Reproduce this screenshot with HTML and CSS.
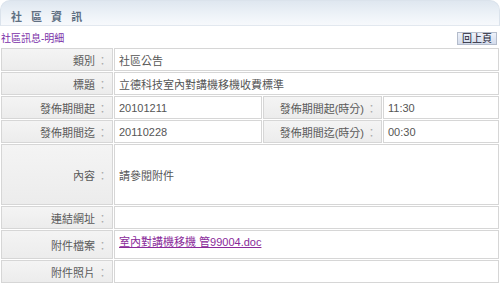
FILE: index.html
```html
<!DOCTYPE html>
<html lang="zh-Hant">
<head>
  <meta charset="UTF-8">
  <title>社區資訊</title>
  <link rel="stylesheet" href="styles.css">
</head>
<body>
  <div class="page">
    <div class="header">
      <h1 class="title">社 區 資 訊</h1>
    </div>

    <div class="toolbar">
      <span class="crumb">社區訊息-明細</span>
      <button class="back-btn">回上頁</button>
    </div>

    <table class="detail">
      <colgroup>
        <col class="c-label">
        <col class="c-value">
        <col class="c-label2">
        <col class="c-value2">
      </colgroup>
      <tr>
        <th>類別<span class="colon">：</span></th>
        <td colspan="3">社區公告</td>
      </tr>
      <tr>
        <th>標題<span class="colon">：</span></th>
        <td colspan="3">立德科技室內對講機移機收費標準</td>
      </tr>
      <tr>
        <th>發佈期間起<span class="colon">：</span></th>
        <td>20101211</td>
        <th>發佈期間起(時分)<span class="colon">：</span></th>
        <td>11:30</td>
      </tr>
      <tr>
        <th>發佈期間迄<span class="colon">：</span></th>
        <td>20110228</td>
        <th>發佈期間迄(時分)<span class="colon">：</span></th>
        <td>00:30</td>
      </tr>
      <tr class="tall">
        <th>內容<span class="colon">：</span></th>
        <td colspan="3">請參閱附件</td>
      </tr>
      <tr>
        <th>連結網址<span class="colon">：</span></th>
        <td colspan="3"></td>
      </tr>
      <tr class="file-row">
        <th>附件檔案<span class="colon">：</span></th>
        <td colspan="3" class="top"><a href="#">室內對講機移機 管99004.doc</a></td>
      </tr>
      <tr>
        <th>附件照片<span class="colon">：</span></th>
        <td colspan="3"></td>
      </tr>
    </table>
  </div>
</body>
</html>
```

FILE: styles.css
```css
body {
  margin: 0;
  background: #fff;
  font-family: "Liberation Sans", Arial, "Noto Sans CJK TC", sans-serif;
  font-size: 11px;
  color: #555;
}

.page {
  width: 500px;
}

.header {
  height: 26px;
  border: 1px solid #dbe3ec;
  border-bottom: 1px solid #e2e8ef;
  border-radius: 10px 10px 0 0;
  background: linear-gradient(to bottom, #dfe7f0 0%, #eef3f8 60%, #f7f9fc 100%);
  box-sizing: border-box;
}

.title {
  margin: 0;
  padding: 9px 0 0 10px;
  font-size: 11px;
  font-weight: bold;
  letter-spacing: 3px;
  color: #5f6f82;
  line-height: 14px;
}

.toolbar {
  display: flex;
  justify-content: space-between;
  align-items: flex-end;
  height: 21px;
  padding: 0 3px 0 1px;
}

.crumb {
  color: #7a2fa8;
  font-size: 10px;
  line-height: 12px;
  margin-bottom: 2px;
}

.back-btn {
  font-family: inherit;
  font-size: 10px;
  color: #223;
  background: linear-gradient(to bottom, #eef2fa, #d4dcec);
  border: 1px solid #b4bccb;
  padding: 0 4px;
  height: 13px;
  line-height: 11px;
  margin-bottom: 2px;
}

.detail {
  width: 500px;
  border-collapse: separate;
  border-spacing: 1px;
}

.c-label { width: 112px; }
.c-value { width: 148px; }
.c-label2 { width: 119px; }

.detail th,
.detail td {
  height: 21px;
  border: 1px solid #d6d6d6;
  padding: 0 4px;
  font-weight: normal;
  vertical-align: middle;
}

.detail th {
  text-align: right;
  color: #5a5a5a;
  background: linear-gradient(to bottom, #f4f4f4, #ececec);
}

.detail td {
  background: #fff;
  color: #555;
}

.colon {
  color: #aaa;
  padding-left: 2px;
}

.tall th,
.tall td {
  height: 59px;
}

.file-row th,
.file-row td {
  height: 25px;
}

.detail td.top {
  vertical-align: top;
  padding-top: 2px;
}

.detail a {
  color: #8a2a9a;
  text-decoration: underline;
}
```
